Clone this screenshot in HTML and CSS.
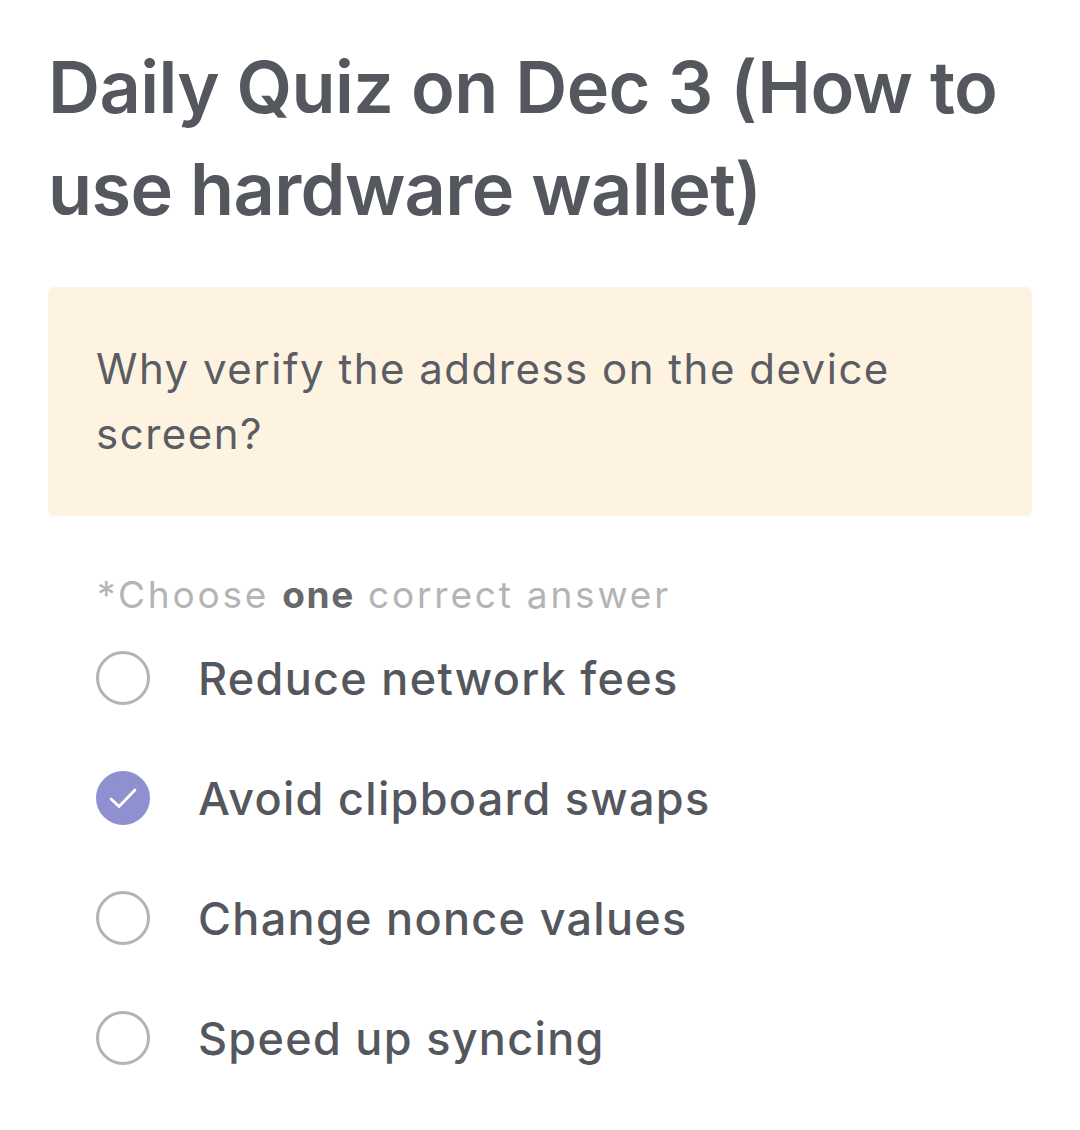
FILE: index.html
```html
<!DOCTYPE html>
<html lang="en">
<head>
<meta charset="utf-8">
<title>Daily Quiz</title>
<link rel="stylesheet" href="styles.css">
</head>
<body>
<main class="quiz">
  <h1 class="quiz-title">Daily Quiz on Dec 3 (How to use hardware wallet)</h1>
  <div class="question-card">
    <p class="question-text">Why verify the address on the device screen?</p>
  </div>
  <p class="hint">*Choose <strong>one</strong> correct answer</p>
  <ul class="options">
    <li class="option">
      <span class="radio"></span>
      <span class="option-label">Reduce network fees</span>
    </li>
    <li class="option is-selected">
      <span class="radio">
        <svg class="check" viewBox="0 0 26 22" width="30" height="25" aria-hidden="true"><path d="M2.5 11.5L9.5 18L23.5 3.5" fill="none" stroke="#fff" stroke-width="2.5" stroke-linecap="round" stroke-linejoin="round"/></svg>
      </span>
      <span class="option-label">Avoid clipboard swaps</span>
    </li>
    <li class="option">
      <span class="radio"></span>
      <span class="option-label">Change nonce values</span>
    </li>
    <li class="option">
      <span class="radio"></span>
      <span class="option-label">Speed up syncing</span>
    </li>
  </ul>
</main>
</body>
</html>
```

FILE: styles.css
```css
* { box-sizing: border-box; }

html, body {
  margin: 0;
  padding: 0;
  background: #ffffff;
}

body {
  font-family: Inter, "Noto Sans", sans-serif;
  color: #54575d;
}

.quiz {
  padding: 36px 48px 0;
}

.quiz-title {
  margin: 0;
  font-size: 72px;
  line-height: 102px;
  font-weight: 600;
  letter-spacing: -0.6px;
  color: #54575d;
}

.question-card {
  margin-top: 47px;
  background: #fef3e1;
  border-radius: 6px;
  padding: 49px 48px 50px;
}

.question-text {
  margin: 0;
  font-size: 42px;
  line-height: 65px;
  font-weight: 400;
  letter-spacing: 1.5px;
  color: #5a5d63;
}

.hint {
  margin: 55px 0 0;
  padding-left: 49px;
  font-size: 37px;
  line-height: 47px;
  letter-spacing: 2.8px;
  color: #b4b4b4;
}

.hint strong {
  color: #67686b;
  font-weight: 700;
  letter-spacing: 1.6px;
}

.options {
  list-style: none;
  margin: 0;
  padding: 0 0 0 48px;
}

.option {
  display: flex;
  align-items: center;
  gap: 48px;
  height: 120px;
}

.radio {
  flex: none;
  width: 54px;
  height: 54px;
  border-radius: 50%;
  border: 3px solid #b3b3b3;
  display: flex;
  align-items: center;
  justify-content: center;
}

.is-selected .radio {
  background: #8f90d0;
  border-color: #8f90d0;
}

.check {
  display: block;
}

.option-label {
  font-size: 45px;
  font-weight: 500;
  letter-spacing: 1.3px;
  color: #54575d;
}
```
